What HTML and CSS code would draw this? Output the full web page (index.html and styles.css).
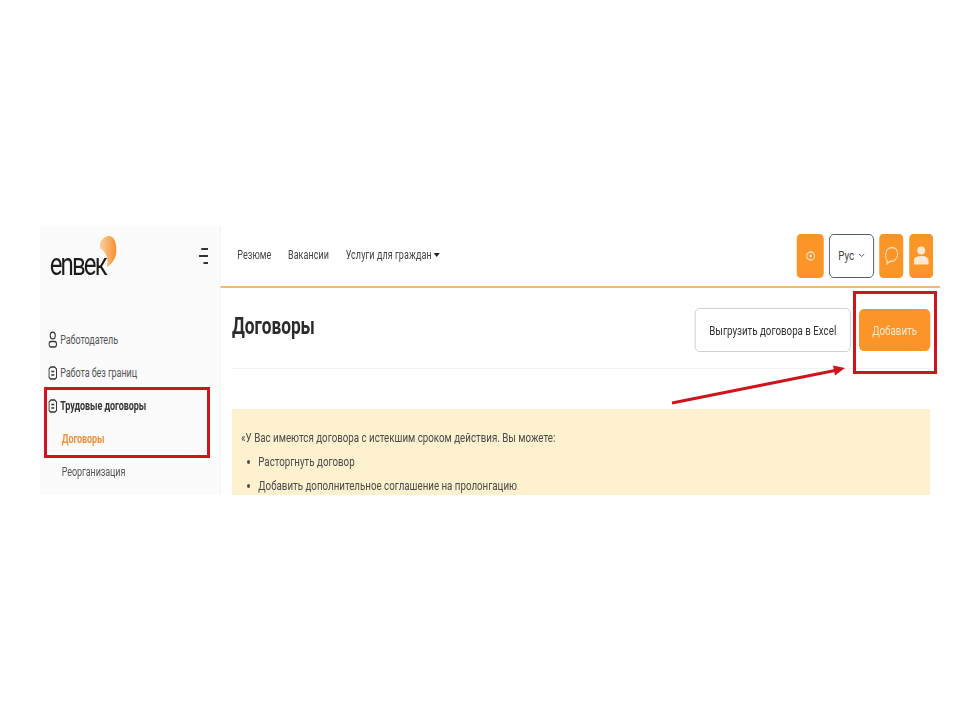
FILE: index.html
```html
<!DOCTYPE html>
<html>
<head>
    <title>Договоры</title>
    <meta charset="UTF-8"/>
    <link rel="stylesheet" href="styles.css">
</head>
<body>
    <div class="frame">
        <div class="app">
            <aside class="sidebar">
                <div class="brand">
                    <div class="logo">
                        <span class="logo-text">enвек</span>
                        <svg class="logo-mark" width="22" height="31" viewBox="0 0 24 32" preserveAspectRatio="none">
                            <defs>
                                <linearGradient id="markFill" x1="0" y1="0" x2="1" y2="0">
                                    <stop offset="0" stop-color="#fbcf9f"/>
                                    <stop offset="1" stop-color="#f68f2e"/>
                                </linearGradient>
                            </defs>
                            <path d="M0 8C3 2 8 0 14 0C22 1 24 9 24 15C24 22 18 29 10 32C13 24 8 15 0 13Z" fill="url(#markFill)"/>
                        </svg>
                    </div>
                    <svg class="burger" width="12" height="18" viewBox="0 0 12 18">
                        <path d="M3 2H12M0 9H12M6 16H12" stroke="#333" stroke-width="2"/>
                    </svg>
                </div>
                <nav class="side-nav">
                    <a class="side-item">
                        <svg width="12" height="17" viewBox="0 0 12 17" fill="none" stroke="#333" stroke-width="1.400">
                            <circle cx="6" cy="4.500" r="3.400"/>
                            <rect x="1" y="10.500" width="10" height="5.500" rx="2.700"/>
                        </svg>
                        Работодатель
                    </a>
                    <a class="side-item">
                        <svg width="12" height="14" viewBox="0 0 12 14" fill="none" stroke="#333" stroke-width="1.400">
                            <path d="M1 3L3.500 1H8.500L11 3V11.500L9 13H3L1 11.500Z"/>
                            <path d="M4 5.500H8M4 9H8"/>
                        </svg>
                        Работа без границ
                    </a>
                    <a class="side-item side-active">
                        <svg width="12" height="14" viewBox="0 0 12 14" fill="none" stroke="#333" stroke-width="1.400">
                            <path d="M1 3L3.500 1H8.500L11 3V11.500L9 13H3L1 11.500Z"/>
                            <path d="M4 5.500H8M4 9H8"/>
                        </svg>
                        Трудовые договоры
                    </a>
                    <a class="side-sub side-current">Договоры</a>
                    <a class="side-sub">Реорганизация</a>
                </nav>
            </aside>
            <main class="content">
                <header class="topbar">
                    <nav class="top-nav">
                        <a>Резюме</a>
                        <a>Вакансии</a>
                        <a>Услуги для граждан<span class="caret"></span></a>
                    </nav>
                    <div class="top-actions">
                        <button class="icon-btn icon-wide">
                            <svg width="13" height="10" viewBox="0 0 13 10" fill="none" stroke="#fde3c4" stroke-width="1.300">
                                <ellipse cx="6.500" cy="5" rx="5.300" ry="4"/>
                                <ellipse cx="6.500" cy="5" rx="1.800" ry="1.400" fill="#fde3c4" stroke="none"/>
                            </svg>
                        </button>
                        <button class="lang-btn">Рус
                            <svg width="9" height="5" viewBox="0 0 9 5" fill="none" stroke="#444" stroke-width="1">
                                <path d="M1 1L4.500 3.500L8 1"/>
                            </svg>
                        </button>
                        <button class="icon-btn">
                            <svg width="19" height="20" viewBox="0 0 19 20" fill="none" stroke="#fde3c4" stroke-width="1.300">
                                <path d="M4 15.500C2 13.500 1.500 11.500 1.500 9.500C1.500 5 4.500 1.500 10 1.500C15 1.500 17.500 4.500 17.500 8C17.500 12.500 13 15.500 7 15.500L3 18Z"/>
                            </svg>
                        </button>
                        <button class="icon-btn icon-last">
                            <svg width="20" height="19" viewBox="0 0 20 19" fill="#fde9d2">
                                <ellipse cx="10" cy="4.500" rx="5.300" ry="4"/>
                                <path d="M0 18.500V15C0 11.500 4 10 10 10C16 10 20 11.500 20 15V18.500Z"/>
                            </svg>
                        </button>
                    </div>
                </header>
                <div class="page-head">
                    <h1>Договоры</h1>
                    <div class="page-actions">
                        <button class="btn-outline">Выгрузить договора в Excel</button>
                        <button class="btn-main">Добавить</button>
                    </div>
                </div>
                <div class="notice">
                    <p>«У Вас имеются договора с истекшим сроком действия. Вы можете:</p>
                    <ul>
                        <li>Расторгнуть договор</li>
                        <li>Добавить дополнительное соглашение на пролонгацию</li>
                    </ul>
                </div>
            </main>
        </div>
    </div>

    <!-- пометки поверх скриншота -->
    <div class="mark mark-side"></div>
    <div class="mark mark-add"></div>
    <svg class="arrow" width="180" height="40" viewBox="0 0 180 40">
        <path d="M2 38L165 5.500" stroke="#d0141e" stroke-width="3"/>
        <path d="M175 3L163 0.500L165 10.500Z" fill="#d0141e"/>
    </svg>
</body>
</html>
```

FILE: styles.css
```css
html {
    overflow: hidden;
}
body {
    margin: 0;
    background-color: #ffffff;
    font-family: Roboto, "Open Sans", sans-serif;
    color: #333333;
    height: 720px;
    overflow: hidden;
    position: relative;
}
button {
    font-family: inherit;
    cursor: pointer;
}
.frame {
    width: 900px;
    height: 269px;
    margin: 226px 0 0 40px;
    overflow: hidden;
}
/* исходный снимок сжат по горизонтали, поэтому вся страница сжата на 0.75 */
.app {
    display: flex;
    width: 1200px;
    height: 269px;
    margin-right: -300px;
    overflow: hidden;
    transform: scaleX(0.75);
    transform-origin: 0 0;
}
.sidebar {
    width: 240px;
    flex-shrink: 0;
    background-color: #fbfbfb;
    border-right: 1px solid #f1f1f1;
}
.brand {
    display: flex;
    align-items: center;
    justify-content: space-between;
    padding: 10px 16px 0 13px;
    height: 52px;
}
.logo {
    position: relative;
    width: 93px;
    height: 44px;
}
.logo-text {
    position: absolute;
    left: 0;
    bottom: 2px;
    font-size: 32px;
    line-height: 36px;
    color: #1c1c1c;
    letter-spacing: -2.500px;
}
.logo-mark {
    position: absolute;
    left: 67px;
    top: -4px;
}
.burger {
    margin-bottom: 13px;
}
.side-nav {
    display: flex;
    flex-direction: column;
    padding: 35px 0 0 11px;
}
.side-item, .side-sub {
    display: flex;
    align-items: center;
    gap: 4px;
    height: 33px;
    font-size: 12px;
    letter-spacing: -0.1px;
    color: #555555;
}
.side-active {
    font-weight: 700;
    color: #333333;
}
.side-sub {
    padding-left: 18px;
}
.side-current {
    font-weight: 700;
    color: #f0923a;
}
.content {
    flex: 1;
    min-width: 0;
}
.topbar {
    display: flex;
    align-items: center;
    justify-content: space-between;
    height: 60px;
    padding: 0 9px 0 22px;
    border-bottom: 2px solid #f8b673;
}
.top-nav {
    display: flex;
    gap: 22px;
    padding-bottom: 2px;
    font-size: 12px;
    letter-spacing: 0.1px;
    color: #444444;
}
.caret {
    display: inline-block;
    margin-left: 3px;
    vertical-align: 2px;
    border: 4px solid transparent;
    border-top: 4px solid #222222;
    border-bottom: none;
}
.top-actions {
    display: flex;
    align-items: center;
    gap: 7px;
    padding-bottom: 1px;
}
.icon-btn {
    display: flex;
    align-items: center;
    justify-content: center;
    width: 32px;
    height: 44px;
    padding: 0;
    border: none;
    border-radius: 5px;
    background-color: #fb9527;
}
.icon-wide {
    width: 36px;
}
.icon-last {
    margin-left: 1px;
}
.lang-btn {
    display: flex;
    align-items: center;
    justify-content: center;
    gap: 5px;
    width: 60px;
    height: 44px;
    padding: 0;
    background-color: #ffffff;
    border: 1px solid #3c4656;
    border-radius: 6px;
    font-size: 13px;
    color: #444444;
}
.page-head {
    display: flex;
    align-items: center;
    justify-content: space-between;
    height: 80px;
    margin: 0 13px 40px 15px;
    border-bottom: 1px solid #f2f2f2;
}
.page-head h1 {
    margin: 0 0 4px 0;
    font-size: 23px;
    font-weight: 700;
    color: #2b2b2b;
}
.page-actions {
    display: flex;
    align-items: center;
    gap: 11px;
    padding-top: 4px;
}
.btn-outline {
    width: 208px;
    height: 44px;
    padding: 0;
    background-color: #ffffff;
    border: 1px solid #c9c9c9;
    border-radius: 6px;
    font-size: 13px;
    color: #333333;
}
.btn-main {
    width: 95px;
    height: 42px;
    padding: 0;
    background-color: #fb9527;
    border: none;
    border-radius: 6px;
    font-size: 13px;
    color: #fde9d2;
}
.notice {
    margin: 0 13px 0 15px;
    padding: 20px 12px;
    background-color: #fdf1cf;
    font-size: 13px;
    color: #4a4a4a;
}
.notice p {
    margin: 0 0 7px 0;
    line-height: 17px;
}
.notice ul {
    margin: 0;
    padding-left: 23px;
}
.notice li {
    line-height: 17px;
    margin-bottom: 7px;
}
.mark {
    position: absolute;
    box-sizing: border-box;
    border: 3px solid #d0141e;
}
.mark-side {
    left: 44px;
    top: 387px;
    width: 166px;
    height: 71px;
}
.mark-add {
    left: 853px;
    top: 291px;
    width: 84px;
    height: 83px;
}
.arrow {
    position: absolute;
    left: 670px;
    top: 365px;
}
```
